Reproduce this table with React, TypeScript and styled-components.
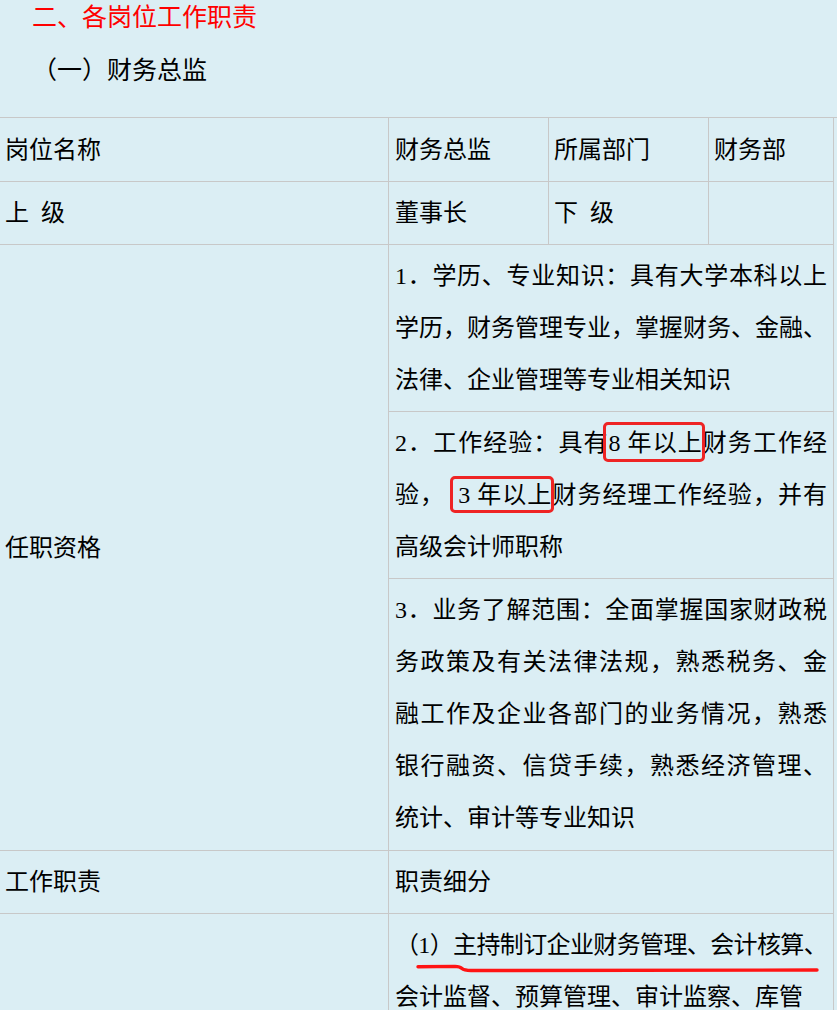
import React from 'react';
import styled, { createGlobalStyle } from 'styled-components';

const GlobalStyle = createGlobalStyle`
  html, body {
    margin: 0;
    padding: 0;
    background: #dbeef4;
  }
  body {
    font-family: "Liberation Serif", "Noto Sans CJK SC", serif;
    color: #000;
  }
`;

const Page = styled.div`
  background: #dbeef4;
  min-height: 100vh;
  overflow: hidden;
`;

const Heading = styled.div<{ $red?: boolean; $gap?: number }>`
  padding-left: 32px;
  margin-top: ${p => p.$gap ?? 0}px;
  font-size: 25px;
  line-height: 36px;
  color: ${p => (p.$red ? '#ff0000' : '#000')};
`;

const Sheet = styled.div`
  display: grid;
  grid-template-columns: 389px 160px 160px 125px;
  margin-top: 28px;
  border-top: 1px solid #c8c8c8;
  font-size: 24px;
  line-height: 52px;
  word-spacing: 6px;
`;

const Cell = styled.div<{ $cols?: number; $rows?: number; $inset?: number; $middle?: boolean; $extra?: number }>`
  position: relative;
  grid-column: span ${p => p.$cols ?? 1};
  grid-row: span ${p => p.$rows ?? 1};
  padding: 5px 6px ${p => 5 + (p.$extra ?? 0)}px ${p => p.$inset ?? 5}px;
  border-right: 1px solid #c8c8c8;
  border-bottom: 1px solid #c8c8c8;
  display: ${p => (p.$middle ? 'flex' : 'block')};
  align-items: center;
`;

const Line = styled.div<{ $fill?: boolean; $tight?: boolean }>`
  text-align: justify;
  text-align-last: ${p => (p.$fill ? 'justify' : 'left')};
  letter-spacing: ${p => (p.$tight ? '-0.7px' : 'normal')};
`;

const Boxed = styled.span<{ $lead?: number; $top?: number; $bottom?: number }>`
  position: relative;
  word-spacing: 0;
  &::after {
    content: '';
    position: absolute;
    left: ${p => -(p.$lead ?? 3)}px;
    right: -2px;
    top: ${p => -(p.$top ?? 8)}px;
    bottom: ${p => -(p.$bottom ?? 6)}px;
    border: 3px solid #ee2424;
    border-radius: 5px;
    pointer-events: none;
  }
`;

const Scribble = styled.svg`
  position: absolute;
  left: 0;
  top: 0;
  width: 445px;
  height: 70px;
  overflow: visible;
  pointer-events: none;
`;

type Para = { lines: string[]; tightFirst?: boolean };

const Text = ({ lines, tightFirst }: Para) => (
  <>
    {lines.map((t, i) => (
      <Line key={i} $fill={i < lines.length - 1} $tight={tightFirst && i === 0}>
        {t}
      </Line>
    ))}
  </>
);

export default function App() {
  return (
    <Page>
      <GlobalStyle />
      <Heading $red>二、各岗位工作职责</Heading>
      <Heading $gap={17}>（一）财务总监</Heading>

      <Sheet>
        <Cell style={{ paddingTop: 6 }}>岗位名称</Cell>
        <Cell $inset={6} style={{ paddingTop: 6 }}>财务总监</Cell>
        <Cell style={{ paddingTop: 6 }}>所属部门</Cell>
        <Cell style={{ paddingTop: 6 }}>财务部</Cell>

        <Cell>上 级</Cell>
        <Cell $inset={6}>董事长</Cell>
        <Cell>下 级</Cell>
        <Cell />

        <Cell $rows={3} $middle>任职资格</Cell>
        <Cell $cols={3} $inset={6}>
          <Text
            lines={[
              '1．学历、专业知识：具有大学本科以上',
              '学历，财务管理专业，掌握财务、金融、',
              '法律、企业管理等专业相关知识',
            ]}
          />
        </Cell>
        <Cell $cols={3} $inset={6}>
          <Line $fill>
            2．工作经验：具有<Boxed $lead={6}>8 年以上</Boxed>财务工作经
          </Line>
          <Line $fill>
            验， <Boxed $lead={8} $top={6} $bottom={5}>3 年以上</Boxed>财务经理工作经验，并有
          </Line>
          <Line>高级会计师职称</Line>
        </Cell>
        <Cell $cols={3} $inset={6} $extra={1}>
          <Text
            lines={[
              '3．业务了解范围：全面掌握国家财政税',
              '务政策及有关法律法规，熟悉税务、金',
              '融工作及企业各部门的业务情况，熟悉',
              '银行融资、信贷手续，熟悉经济管理、',
              '统计、审计等专业知识',
            ]}
          />
        </Cell>

        <Cell>工作职责</Cell>
        <Cell $cols={3} $inset={6}>职责细分</Cell>

        <Cell />
        <Cell $cols={3} $inset={6}>
          <Text tightFirst lines={['（1）主持制订企业财务管理、会计核算、', '会计监督、预算管理、审计监察、库管']} />
          <Scribble viewBox="0 0 445 70">
            <path
              d="M29 52.7 L66 52.4 Q71 52.6 73 54.5 Q75 56.4 82 56.5 L428 56"
              fill="none"
              stroke="#ff1414"
              strokeWidth="3.4"
              strokeLinecap="round"
              strokeLinejoin="round"
            />
          </Scribble>
        </Cell>
      </Sheet>
    </Page>
  );
}
